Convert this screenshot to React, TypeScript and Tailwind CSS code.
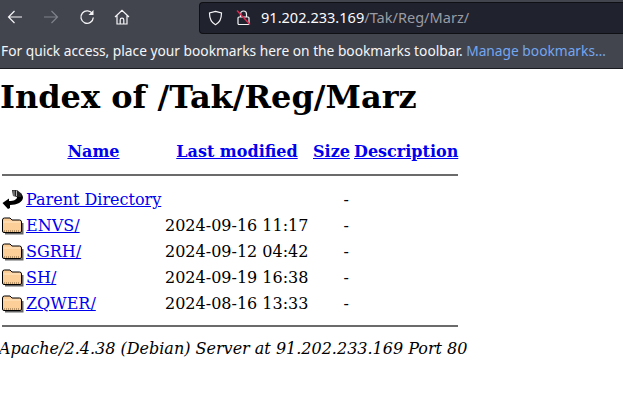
function Folder() {
  return (
    <svg width="22" height="21" viewBox="0 0 22 21" className="block">
      <path d="M3 18.5 H20.5 V8" fill="none" stroke="#666" strokeWidth="2" />
      <path d="M0.5 5 Q0.5 3 2.5 3 H8 L10 5 H17.5 Q19.5 5 19.5 7 V16 Q19.5 17.5 18 17.5 H2 Q0.5 17.5 0.5 16 Z" fill="#fdcf98" stroke="#000" strokeWidth="1" />
      <path d="M1.5 7 H18.5" stroke="#ffe6c6" strokeWidth="1" />
      <path d="M2 16 H18" stroke="#7a5a35" strokeWidth="1" strokeDasharray="1 1" />
    </svg>
  );
}
function Back() {
  return (
    <svg width="22" height="21" viewBox="0 0 22 21" className="block">
      <path d="M0.5 14 L7 9.5 L7 12 C12 12 15 10.5 15 8 L15 5 C17 3 21 5 21 8.5 C21 13 15 16 8 16 L8 19 L6 20 Z" fill="#000" />
      <path d="M10 1 H15 L20 5 L19 8 H15 L11 7 Z" fill="#222" />
      <path d="M12 1.5 V7 M14.5 1.5 V7" stroke="#ddd" strokeWidth="0.8" />
    </svg>
  );
}
const rows = [
  ["ENVS/", "2024-09-16 11:17"],
  ["SGRH/", "2024-09-12 04:42"],
  ["SH/", "2024-09-19 16:38"],
  ["ZQWER/", "2024-08-16 13:33"],
];
const link = "text-[#0000ee] underline";
export default function App() {
  return (
    <div className="w-[623px] h-[409px] overflow-hidden bg-white font-['DejaVu_Serif',serif] text-[16px] text-black">
      <div className="h-[69px] bg-[#42454e] border-b border-[#1a1b20] font-['Noto_Sans',sans-serif]">
        <div className="h-[34px] flex items-center">
          <div className="flex items-center gap-[20px] pl-[7px] w-[199px] text-[#f5f5f7]">
            <svg width="16" height="16" viewBox="0 0 16 16" fill="none" stroke="#f5f5f7" strokeWidth="1.2" className="shrink-0">
              <path d="M15 8H1.5M7.5 2 1.5 8l6 6" />
            </svg>
            <svg width="16" height="16" viewBox="0 0 16 16" fill="none" stroke="#80828a" strokeWidth="1.2" className="shrink-0">
              <path d="M1 8h13.5M8.5 2l6 6-6 6" />
            </svg>
            <svg width="16" height="16" viewBox="0 0 16 16" fill="none" stroke="#f5f5f7" strokeWidth="1.3" className="shrink-0">
              <path d="M13.5 5A6.2 6.2 0 1 0 14.3 8.5" />
              <path d="M14.5 1v5h-5z" fill="#f5f5f7" stroke="none" />
            </svg>
            <svg width="16" height="16" viewBox="0 0 16 16" fill="none" stroke="#f5f5f7" strokeWidth="1.2" className="shrink-0 -ml-[1px]">
              <path d="M1 8 8 1.3 15 8M3 6.5V15h10V6.5M6.2 15v-4a1.8 1.8 0 0 1 3.6 0v4" />
            </svg>
          </div>
          <div className="h-[32px] flex-1 flex items-center bg-[#20222d] border border-[#0f1014] rounded-l-[4px] border-r-0 mt-[1px]">
            <svg width="15" height="16" viewBox="0 0 15 16" fill="none" stroke="#f5f5f7" strokeWidth="1.2" className="ml-[8px] shrink-0">
              <path d="M7.5 1.3 13.5 3c0 6-1.5 9.5-6 11.7C3 12.5 1.5 9 1.5 3z" />
            </svg>
            <svg width="15" height="17" viewBox="0 0 15 17" fill="none" className="ml-[13px] shrink-0">
              <path d="M4.5 8V5a3 3 0 0 1 6 0v3" stroke="#f5f5f7" strokeWidth="1.2" />
              <rect x="2" y="8" width="11" height="7.5" rx="1" stroke="#f5f5f7" strokeWidth="1.2" />
              <path d="M1 1.5 14 15.5" stroke="#e22850" strokeWidth="1.4" />
            </svg>
            <span className="ml-[10px] text-[14.55px] leading-none whitespace-nowrap text-[#fbfbfe]">
              91.202.233.169<span className="text-[#9a9ba3]">/Tak/Reg/Marz/</span>
            </span>
          </div>
        </div>
        <div className="h-[34px] flex items-center pl-[1px] text-[13.75px] whitespace-nowrap text-[#f5f5f7]">
          For quick access, place your bookmarks here on the bookmarks toolbar.&nbsp;
          <span className="text-[#74a7f0]">Manage bookmarks…</span>
        </div>
      </div>
      <h1 className="text-[32px] font-bold leading-[38px] mt-[9px] mb-[24px]">Index of /Tak/Reg/Marz</h1>
      <table className="border-separate border-spacing-[2px] leading-[19px]">
        <thead>
          <tr>
            <th className="p-0 w-[22px]"></th>
            <th className="p-0 w-[137px] pr-[2px]"><a className={link}>Name</a></th>
            <th className="p-0 w-[146px] pr-[2px]"><a className={link}>Last modified</a></th>
            <th className="p-0 w-[39px] text-left"><a className={link}>Size</a></th>
            <th className="p-0"><a className={link}>Description</a></th>
          </tr>
          <tr>
            <th colSpan={5} className="p-0 pt-[3px]"><hr className="border-0 border-t-2 border-[#6b6b6b] mt-[8px] mb-[9px]" /></th>
          </tr>
        </thead>
        <tbody>
          <tr className="h-[24px]">
            <td className="p-0 pt-[1px]"><Back /></td>
            <td className="p-0 whitespace-nowrap pt-[1px]"><a className={link}>Parent Directory</a></td>
            <td className="p-0"></td>
            <td className="p-0 text-right pr-[3px] pt-[1px]">-</td>
            <td className="p-0"></td>
          </tr>
          {rows.map(([n, d]) => (
            <tr key={n} className="h-[24px]">
              <td className="p-0"><Folder /></td>
              <td className="p-0"><a className={link}>{n}</a></td>
              <td className="p-0 whitespace-nowrap">{d}</td>
              <td className="p-0 text-right pr-[3px]">-</td>
              <td className="p-0"></td>
            </tr>
          ))}
          <tr>
            <th colSpan={5} className="p-0"><hr className="border-0 border-t-2 border-[#6b6b6b] my-[8px]" /></th>
          </tr>
        </tbody>
      </table>
      <address className="italic leading-[19px] mt-[2px] -ml-[1px]">Apache/2.4.38 (Debian) Server at 91.202.233.169 Port 80</address>
    </div>
  );
}
